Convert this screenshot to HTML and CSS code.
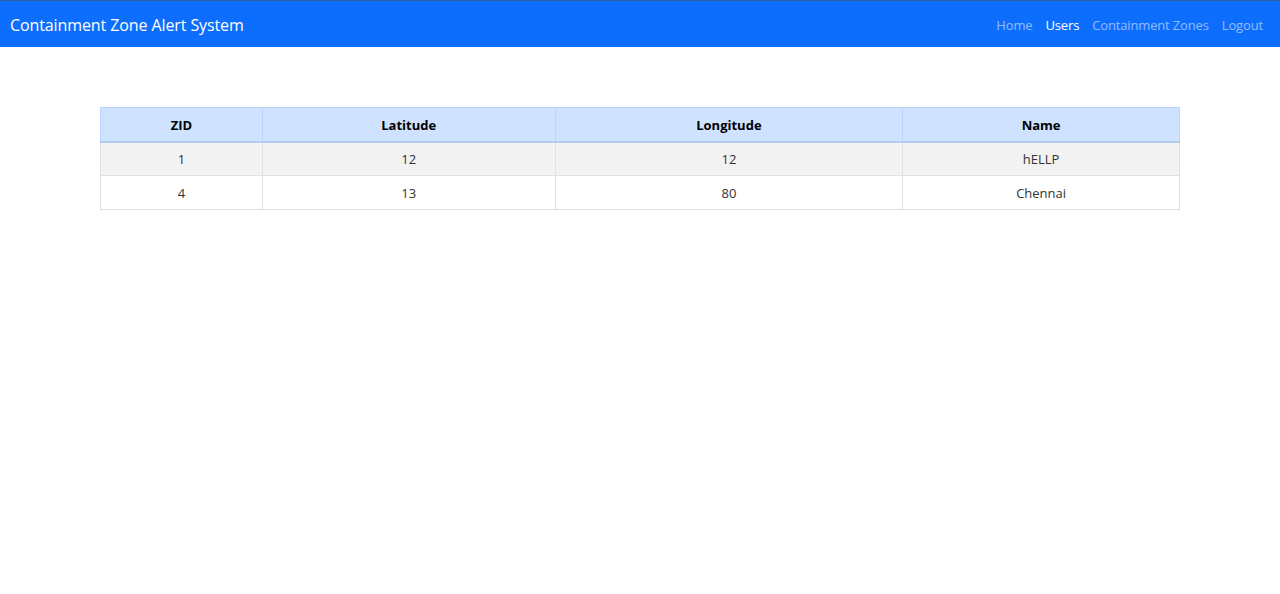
FILE: index.html
```html
<!DOCTYPE html>
<html lang="en">
<head>
<meta charset="utf-8">
<title>Containment Zone Alert System</title>
<link rel="stylesheet" href="styles.css">
</head>
<body>
<nav class="navbar">
  <a class="brand" href="#">Containment Zone Alert System</a>
  <ul class="nav">
    <li><a class="nav-link" href="#">Home</a></li>
    <li><a class="nav-link active" href="#">Users</a></li>
    <li><a class="nav-link" href="#">Containment Zones</a></li>
    <li><a class="nav-link" href="#">Logout</a></li>
  </ul>
</nav>
<main class="content">
  <table class="zones">
    <colgroup>
      <col class="c1"><col class="c2"><col class="c3"><col class="c4">
    </colgroup>
    <thead>
      <tr><th>ZID</th><th>Latitude</th><th>Longitude</th><th>Name</th></tr>
    </thead>
    <tbody>
      <tr class="striped"><td>1</td><td>12</td><td>12</td><td>hELLP</td></tr>
      <tr><td>4</td><td>13</td><td>80</td><td>Chennai</td></tr>
    </tbody>
  </table>
</main>
</body>
</html>
```
FILE: styles.css
```css
* { box-sizing: border-box; }
body {
  margin: 0;
  font-family: "Open Sans", "Noto Sans", sans-serif;
  font-size: 14px;
  color: #212529;
  background: #fff;
}
.navbar {
  display: flex;
  align-items: center;
  justify-content: space-between;
  height: 47px;
  background: #0d6efd;
  border-top: 1px solid #2c5fa6;
  padding: 1px 17px 0 10px;
}
.brand {
  color: #fff;
  text-decoration: none;
  font-size: 16px;
  letter-spacing: -0.1px;
}
.nav {
  display: flex;
  list-style: none;
  margin: 0;
  padding: 0;
  gap: 13px;
}
.nav-link {
  color: rgba(255,255,255,0.55);
  text-decoration: none;
  font-size: 13px;
  letter-spacing: -0.15px;
}
.nav-link.active { color: #fff; }
.content {
  padding: 60px 100px 0;
}
.zones {
  width: 100%;
  border-collapse: collapse;
  font-size: 13px;
}
.c1 { width: 162px; }
.c2 { width: 293px; }
.c3 { width: 348px; }
.c4 { width: 277px; }
.zones th, .zones td {
  text-align: center;
  height: 34px;
  padding: 1px 4px 0;
  border: 1px solid #dee2e6;
}
.zones th {
  background: #cfe2ff;
  border-color: #b6d4fe;
  color: #000;
  font-weight: 700;
  border-bottom: 2px solid #b3cdf0;
}
.zones td { color: #333; }
.zones tr.striped td { background: #f2f2f2; }
```
